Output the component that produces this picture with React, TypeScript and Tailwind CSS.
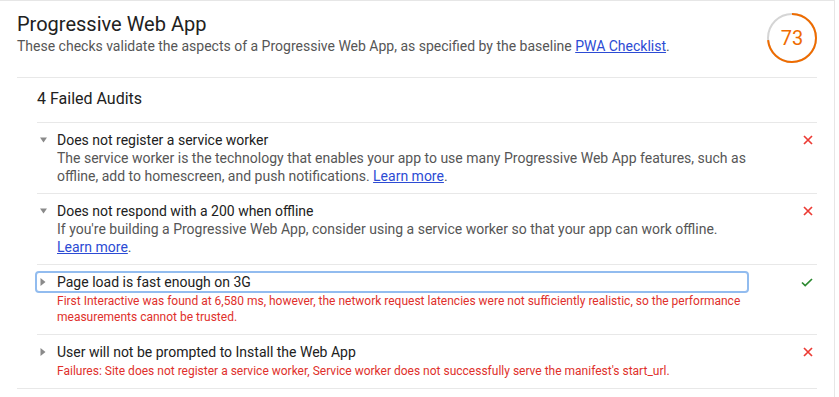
import React from "react";

const Down = () => (
  <svg width="7" height="6" viewBox="0 0 7 6" className="block">
    <path d="M0 0.5h7L3.5 5.5z" fill="#8a8a8a" />
  </svg>
);

const Right = () => (
  <svg width="6" height="8" viewBox="0 0 6 8" className="block">
    <path d="M0.5 0L5.5 4L0.5 8z" fill="#8a8a8a" />
  </svg>
);

const Fail = () => (
  <svg width="10" height="10" viewBox="0 0 10 10">
    <path d="M1 1L9 9M9 1L1 9" stroke="#ec3b34" strokeWidth="1.7" />
  </svg>
);

const Pass = () => (
  <svg width="12" height="9" viewBox="0 0 12 9">
    <path d="M1 4.5L4.2 7.6L11 1" stroke="#2b882f" strokeWidth="1.7" fill="none" />
  </svg>
);

const Gauge = ({ score }: { score: number }) => {
  const r = 24;
  const c = 2 * Math.PI * r;
  return (
    <div className="relative mt-[1px] h-[50px] w-[50px]">
      <svg width="50" height="50" viewBox="0 0 50 50" className="-rotate-90">
        <circle cx="25" cy="25" r={r} fill="none" stroke="#d5d5d5" strokeWidth="2" />
        <circle
          cx="25"
          cy="25"
          r={r}
          fill="none"
          stroke="#ef6c00"
          strokeWidth="2"
          strokeDasharray={`${(c * score) / 100} ${c}`}
        />
      </svg>
      <div className="absolute inset-0 flex items-center justify-center text-[20px] text-[#ef6c00]">
        {score}
      </div>
    </div>
  );
};

const Link = ({ children }: { children: React.ReactNode }) => (
  <a className="text-[#2c4bd4] underline" href="#">
    {children}
  </a>
);

type Row = {
  title: string;
  open: boolean;
  pass?: boolean;
  focus?: boolean;
  desc: React.ReactNode;
  red?: boolean;
  last?: boolean;
};

const rows: Row[] = [
  {
    title: "Does not register a service worker",
    open: true,
    desc: (
      <>
        The service worker is the technology that enables your app to use many Progressive Web App features, such as
        offline, add to homescreen, and push notifications. <Link>Learn more</Link>.
      </>
    ),
  },
  {
    title: "Does not respond with a 200 when offline",
    open: true,
    desc: (
      <>
        If you're building a Progressive Web App, consider using a service worker so that your app can work offline.{" "}
        <Link>Learn more</Link>.
      </>
    ),
  },
  {
    title: "Page load is fast enough on 3G",
    open: false,
    pass: true,
    focus: true,
    red: true,
    desc: "First Interactive was found at 6,580 ms, however, the network request latencies were not sufficiently realistic, so the performance measurements cannot be trusted.",
  },
  {
    title: "User will not be prompted to Install the Web App",
    open: false,
    red: true,
    last: true,
    desc: "Failures: Site does not register a service worker, Service worker does not successfully serve the manifest's start_url.",
  },
];

const AuditRow = ({ row }: { row: Row }) => (
  <div
    className={`flex pt-[8px] ${row.red ? "pb-[9px]" : "pb-[8px]"} ${
      row.last ? "" : "border-b border-[#e8e8e8]"
    }`}
  >
    <div className="w-[710px]">
      <div
        className={`flex h-[18px] items-center text-[14px] leading-[18px] text-[#212121] ${
          row.focus ? "rounded-[2px] outline-2 outline-[#92bcef]" : ""
        }`}
      >
        <div className="w-[20px] pl-[3px]">{row.open ? <Down /> : <Right />}</div>
        <span>{row.title}</span>
      </div>
      <div
        className={
          row.red
            ? "mt-[2px] pl-[20px] text-[12px] leading-[16px] text-[#e0302b]"
            : "pl-[20px] text-[14px] leading-[18px] text-[#565656]"
        }
      >
        {row.desc}
      </div>
    </div>
    <div className="flex h-[18px] flex-1 items-center justify-end pr-[4px]">
      {row.pass ? <Pass /> : <Fail />}
    </div>
  </div>
);

export default function App() {
  return (
    <div
      className="h-[397px] w-[835px] border-t border-r border-[#e6e6e6] bg-white"
      style={{ fontFamily: "Roboto, 'Liberation Sans', sans-serif" }}
    >
      <div className="ml-[17px] w-[800px] border-b border-[#e8e8e8]">
        <div className="flex h-[77px] items-start justify-between border-b border-[#e8e8e8] pt-[11px]">
          <div>
            <h1 className="text-[20px] leading-[24px] text-[#212121]">Progressive Web App</h1>
            <p className="text-[14px] leading-[20px] text-[#565656]">
              These checks validate the aspects of a Progressive Web App, as specified by the baseline{" "}
              <Link>PWA Checklist</Link>.
            </p>
          </div>
          <Gauge score={73} />
        </div>
        <div className="pl-[20px]">
          <div className="h-[45px] border-b border-[#e8e8e8] pt-[9px] text-[16px] leading-[24px] text-[#212121]">
            4 Failed Audits
          </div>
          {rows.map((r) => (
            <AuditRow key={r.title} row={r} />
          ))}
        </div>
      </div>
    </div>
  );
}
